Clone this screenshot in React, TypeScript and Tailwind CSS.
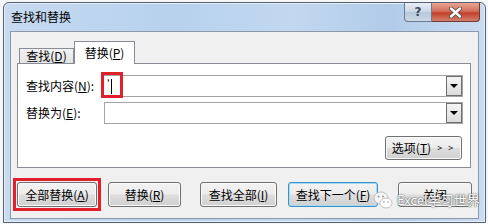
import React from 'react';

const Btn: React.FC<{ className?: string; focused?: boolean; children: React.ReactNode }> = ({ className = '', focused, children }) => (
  <div
    className={`h-[25px] flex items-center justify-center rounded-[3px] border text-[12px] text-black bg-[linear-gradient(#f3f3f3_0%,#ececec_48%,#dedede_52%,#d0d0d0_100%)] ${
      focused
        ? 'border-[#3c8fc9] shadow-[inset_0_0_0_1px_#a7dcf7]'
        : 'border-[#707070] shadow-[inset_0_0_0_1px_#fbfbfb]'
    } ${className}`}
  >
    {children}
  </div>
);

const Combo: React.FC<{ children?: React.ReactNode }> = ({ children }) => (
  <div className="relative w-[361px] h-[22px] border border-[#a5a5a5] bg-white flex items-center">
    <div className="flex-1 pl-[4px] flex items-center h-full">{children}</div>
    <div className="w-[16px] h-[20px] border border-[#6e6e6e] bg-[linear-gradient(#f4f4f4,#dcdcdc)] flex items-center justify-center">
      <div className="w-0 h-0 border-l-[4px] border-r-[4px] border-t-[4px] border-l-transparent border-r-transparent border-t-black" />
    </div>
  </div>
);

export default function App() {
  return (
    <div className="relative w-[488px] h-[224px] overflow-hidden bg-[#f4f6f8] pl-[3px] pt-[2px] font-['Noto_Sans_CJK_SC',sans-serif]">
      {/* window */}
      <div className="w-[483px] h-[221px] flex flex-col rounded-t-[6px] border border-[#56606e] bg-[linear-gradient(90deg,#c6daf0_0%,#b7d1ee_35%,#c2d8ef_60%,#b1cbe9_80%,#cadcf0_100%)] shadow-[inset_0_0_0_1px_#e6eef8]">
        {/* title bar */}
        <div className="h-[28px] flex items-start pl-[7px]">
          <span className="mt-[4px] text-[12px] text-black leading-[20px]">查找和替换</span>
          <div className="ml-auto mr-[5px] flex">
            <div className="w-[28px] h-[19px] flex items-center justify-center rounded-bl-[4px] border border-t-0 border-[#6b7a8f] bg-[linear-gradient(#e9eff6,#c8d6e5_50%,#b7c8da_51%,#cad8e6)]">
              <span className="text-[12px] font-bold text-[#3d4a5a] leading-none font-['DejaVu_Sans',sans-serif]">?</span>
            </div>
            <div className="w-[48px] h-[19px] flex items-center justify-center rounded-br-[4px] border border-l-0 border-t-0 border-[#6b3a33] bg-[linear-gradient(#e8a493,#d4715e_45%,#c2412c_55%,#d2806a)]">
              <svg width="13" height="11" viewBox="0 0 13 11">
                <path d="M2 1.5 L11 9.5 M11 1.5 L2 9.5" stroke="#4a4a4a" strokeWidth="4" strokeLinecap="round" />
                <path d="M2 1.5 L11 9.5 M11 1.5 L2 9.5" stroke="#ffffff" strokeWidth="2.4" strokeLinecap="round" />
              </svg>
            </div>
          </div>
        </div>

        {/* client area */}
        <div className="mx-[6px] h-[188px] border border-[#8a98aa] bg-[#f0f0f0] pl-[6px] pt-[9px] flex flex-col">
          {/* tabs */}
          <div className="relative z-10 flex items-end h-[22px] pl-[2px]">
            <div className="w-[55px] h-[15px] border border-b-0 border-[#898c95] bg-[linear-gradient(#f3f3f3,#e3e3e3)] flex items-center justify-center text-[12px] text-black">
              查找(<span className="underline">D</span>)
            </div>
            <div className="w-[61px] h-[23px] -mb-px border border-b-0 border-[#898c95] bg-white flex items-center justify-center text-[12px] text-black">
              替换(<span className="underline">P</span>)
            </div>
          </div>

          {/* panel */}
          <div className="w-[454px] h-[105px] border border-[#898c95] bg-white pt-[11px] pl-[8px] pr-[7px] flex flex-col">
            <div className="flex items-center h-[22px]">
              <span className="w-[77px] text-[12px] text-black">
                查找内容(<span className="underline">N</span>):
              </span>
              <div className="relative">
                <Combo>
                  <span className="text-[10px] leading-none text-black -mt-[6px]">'</span>
                  <span className="ml-[1px] w-px h-[15px] bg-black" />
                </Combo>
                <div className="absolute left-[-1px] top-[-3px] w-[22px] h-[26px] border-[3px] border-[#e1202b]" />
              </div>
            </div>
            <div className="flex items-center h-[22px] mt-[5px]">
              <span className="w-[78px] text-[12px] text-black">
                替换为(<span className="underline">E</span>):
              </span>
              <Combo />
            </div>
            <div className="flex justify-end mt-[12px] pr-px">
              <div className="w-[77px] h-[24px] flex items-center justify-center gap-[6px] rounded-[3px] border border-[#707070] shadow-[inset_0_0_0_1px_#fbfbfb] bg-[linear-gradient(#f3f3f3_0%,#ececec_48%,#dedede_52%,#d0d0d0_100%)] text-[12px] text-black">
                <span>
                  选项(<span className="underline">T</span>)
                </span>
                <span className="text-[9px] tracking-[2px]">&gt; &gt;</span>
              </div>
            </div>
          </div>

          {/* buttons */}
          <div className="flex mt-[14px]">
            <div className="relative">
              <Btn className="w-[80px]">
                全部替换(<span className="underline">A</span>)
              </Btn>
              <div className="absolute left-[-4px] top-[-4px] w-[88px] h-[33px] border-[3px] border-[#e1202b]" />
            </div>
            <Btn className="w-[73px] ml-[11px]">
              替换(<span className="underline">R</span>)
            </Btn>
            <Btn className="w-[77px] ml-[19px]">
              查找全部(<span className="underline">I</span>)
            </Btn>
            <Btn className="w-[90px] ml-[11px]" focused>
              查找下一个(<span className="underline">F</span>)
            </Btn>
            <Btn className="w-[74px] ml-[20px]">关闭</Btn>
          </div>
        </div>
      </div>

      {/* watermark */}
      <div className="absolute left-[373px] top-[190px] flex items-center gap-[4px]">
        <svg width="20" height="20" viewBox="0 0 20 20">
          <ellipse cx="8" cy="8" rx="7" ry="6" fill="#f4f4f4" stroke="#b5b5b5" strokeWidth="0.8" />
          <ellipse cx="13" cy="13" rx="6" ry="5" fill="#ffffff" stroke="#b5b5b5" strokeWidth="0.8" />
          <circle cx="5.5" cy="6.5" r="1" fill="#9a9a9a" />
          <circle cx="10" cy="6.5" r="1" fill="#9a9a9a" />
          <circle cx="11" cy="12" r="0.8" fill="#9a9a9a" />
          <circle cx="15" cy="12" r="0.8" fill="#9a9a9a" />
        </svg>
        <span className="text-[13px] text-white [text-shadow:0_0_2px_#555,0_0_1px_#555]">Excel学习世界</span>
      </div>
    </div>
  );
}
